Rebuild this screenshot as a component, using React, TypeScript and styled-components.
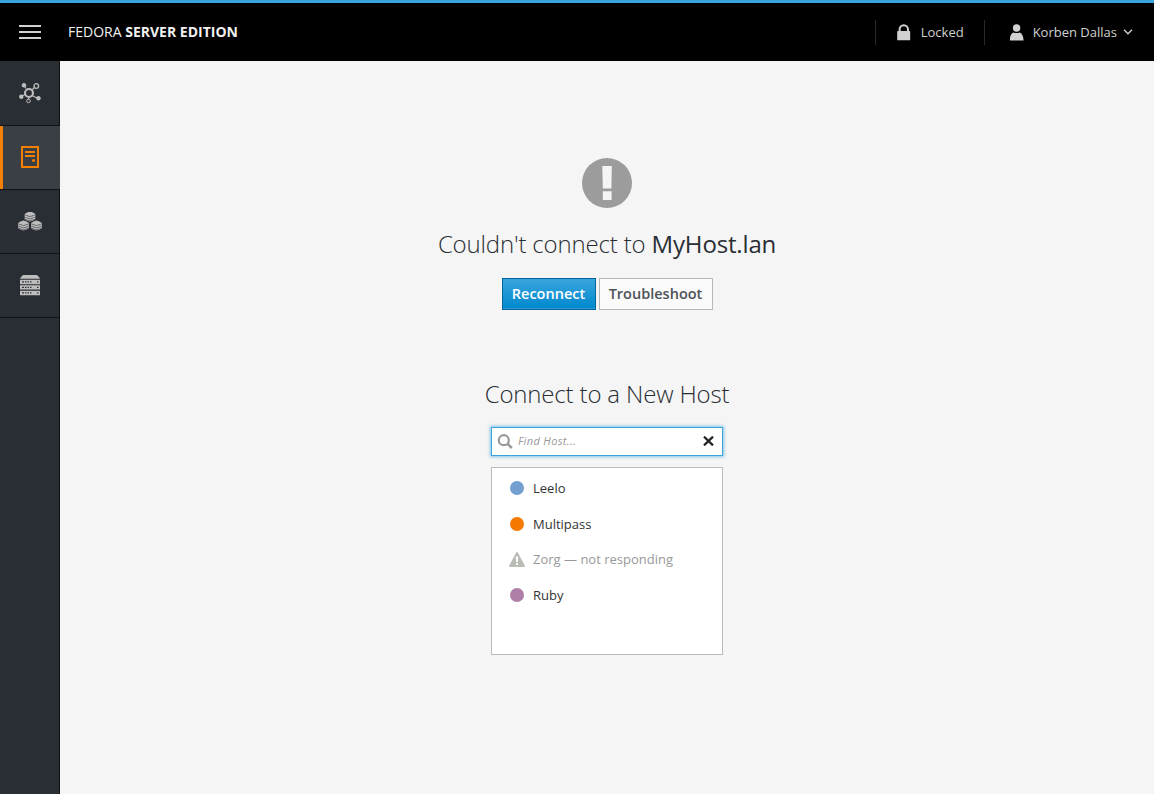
import React from "react";
import styled, { createGlobalStyle } from "styled-components";

const GlobalStyle = createGlobalStyle`
  *, *::before, *::after { box-sizing: border-box; }
  body {
    margin: 0;
    background: #f5f5f5;
    color: #292e34;
    font-family: "Open Sans", sans-serif;
    font-size: 13px;
  }
`;

const Page = styled.div`
  display: flex;
  flex-direction: column;
  height: 794px;
  overflow: hidden;
`;

const Header = styled.header`
  display: flex;
  align-items: center;
  flex: none;
  height: 61px;
  padding-left: 19px;
  padding-right: 21px;
  border-top: 3px solid #39a5dc;
  background: #000;
  color: #d1d1d1;
`;

const MenuButton = styled.button`
  display: flex;
  flex-direction: column;
  gap: 4px;
  width: 22px;
  padding: 0;
  border: 0;
  background: none;
`;

const MenuBar = styled.span`
  height: 2px;
  background: #d1d1d1;
`;

const Brand = styled.div`
  margin-left: 27px;
  font-size: 14px;
  line-height: 20px;
  color: #f0f0f0;
  white-space: nowrap;
  strong { font-weight: 700; }
`;

const HeaderTools = styled.div`
  display: flex;
  align-items: center;
  margin-left: auto;
`;

const Tool = styled.div<{ $gap: number; $left: number; $right: number }>`
  display: flex;
  align-items: center;
  gap: ${(p) => p.$gap}px;
  height: 25px;
  padding-left: ${(p) => p.$left}px;
  padding-right: ${(p) => p.$right}px;
  border-left: 1px solid #292929;
  white-space: nowrap;
`;

const UserName = styled.span`
  display: flex;
  align-items: center;
  gap: 6px;
`;

const Body = styled.div`
  display: flex;
  flex: 1;
  min-height: 0;
`;

const Sidebar = styled.nav`
  width: 60px;
  flex: none;
  background: #292e34;
  border-right: 1px solid #101214;
`;

const NavItem = styled.a<{ $active?: boolean }>`
  display: flex;
  align-items: center;
  justify-content: center;
  width: ${(p) => (p.$active ? 60 : 59)}px;
  height: 64px;
  padding-bottom: ${(p) => (p.$active ? 2 : 0)}px;
  border-bottom: 1px solid #101214;
  color: ${(p) => (p.$active ? "#f57f00" : "#bdbdbd")};
  background: ${(p) => (p.$active ? "#393f45" : "transparent")};
  box-shadow: ${(p) => (p.$active ? "inset 3px 0 #f57f00" : "none")};
  &:first-child { height: 65px; }
  svg { display: block; }
`;

const Main = styled.main`
  flex: 1;
  display: flex;
  flex-direction: column;
  align-items: center;
  padding-top: 97px;
`;

const Title = styled.h1<{ $top: number }>`
  margin: ${(p) => p.$top}px 0 0;
  font-size: 24px;
  line-height: 34px;
  font-weight: 300;
  letter-spacing: -0.16px;
  white-space: nowrap;
  strong { font-weight: 400; }
`;

const Actions = styled.div`
  display: flex;
  gap: 3px;
  margin-top: 17px;
`;

const Button = styled.button<{ $primary?: boolean; $width: number }>`
  width: ${(p) => p.$width}px;
  height: 32px;
  padding: 0;
  border: 1px solid ${(p) => (p.$primary ? "#00659c" : "#b7b7b7")};
  background: ${(p) => (p.$primary ? "linear-gradient(#39a5dc, #0088ce)" : "#fafafa")};
  box-shadow: ${(p) => (p.$primary ? "inset 0 -1px #2b9bd6" : "none")};
  color: ${(p) => (p.$primary ? "#fff" : "#4d5258")};
  font: 600 14.5px/30px "Open Sans", sans-serif;
`;

const SearchBox = styled.div`
  display: flex;
  align-items: center;
  width: 232px;
  height: 29px;
  margin-top: 16px;
  padding: 0 8px 1px 5px;
  border: 1px solid #39a5dc;
  background: #fff;
  box-shadow: 0 0 3px 1px rgba(57, 165, 220, 0.6);
`;

const SearchInput = styled.input`
  flex: 1;
  min-width: 0;
  height: 20px;
  margin-left: 5px;
  padding: 0;
  border: 0;
  outline: 0;
  background: none;
  font: italic 11px/20px "Open Sans", sans-serif;
  letter-spacing: 0.35px;
  &::placeholder { color: #999; opacity: 1; }
`;

const HostList = styled.ul`
  width: 232px;
  height: 188px;
  margin: 11px 0 0;
  padding: 2.700px 0 0 17px;
  border: 1px solid #bbb;
  background: #fff;
  list-style: none;
`;

const HostRow = styled.li<{ $muted?: boolean }>`
  display: flex;
  align-items: center;
  gap: 8px;
  height: 35.4px;
  color: ${(p) => (p.$muted ? "#999" : "#333")};
`;

const Dot = styled.span<{ $color: string }>`
  width: 14px;
  height: 14px;
  margin: 0 1px;
  border-radius: 50%;
  background: ${(p) => p.$color};
`;

const LockIcon = () => (
  <svg width="14" height="17" viewBox="0 0 14 17" fill="currentColor">
    <path d="M1.6 7V5.4a5.2 5.2 0 0 1 10.4 0V7h.4q.8 0 .8.8v7.6q0 .9-.9.9H1.1q-.9 0-.9-.9V7.8Q.2 7 1 7zm2 0h6.4V5.4a3.2 3.2 0 0 0-6.4 0z" />
  </svg>
);

const UserIcon = () => (
  <svg width="14" height="17" viewBox="0 0 14 17" fill="currentColor">
    <circle cx="6.600" cy="4" r="3.7" />
    <path d="M-.4 16.400C-.1 12.200 1.100 9.300 3.400 8.400Q6.600 9.700 9.800 8.400C12.100 9.300 13.300 12.200 13.600 16.400z" />
  </svg>
);

const ChevronIcon = () => (
  <svg width="10" height="6" viewBox="0 0 10 6" fill="none" stroke="currentColor" strokeWidth="1.3">
    <path d="M1 .8 5 4.800 9 .8" />
  </svg>
);

const ClusterIcon = () => (
  <svg width="24" height="22" viewBox="0 0 24 22" fill="none" stroke="currentColor">
    <circle cx="11" cy="11" r="4" strokeWidth="2.1" />
    <path d="m6.500 4.500 1.500 2M14 8l2.500-2.500M4.500 13.700l2.500-1.200M14 13.500l5 2.500M10.700 15.500v2" strokeWidth="1.1" />
    <circle cx="18.300" cy="4" r="2.300" strokeWidth="1.300" />
    <circle cx="10.500" cy="18.900" r="1.800" strokeWidth="1" />
    <g fill="currentColor" stroke="none">
      <circle cx="6" cy="3.200" r="2.200" />
      <circle cx="3.300" cy="14.700" r="2.200" />
      <circle cx="20.500" cy="16.200" r="2.200" />
    </g>
  </svg>
);

const HostIcon = () => (
  <svg width="18" height="22" viewBox="0 0 18 22" fill="none" stroke="currentColor" strokeWidth="2">
    <path d="M1 1h16v20H1zM4 6h10M4 10h10M11 14.500h3" />
    <path d="M12.500 13v3" strokeWidth="1" />
  </svg>
);

const Stack = ({ x, y }: { x: number; y: number }) => (
  <g transform={`translate(${x} ${y})`}>
    <path d="M0 2.600Q2 .6 5.300 0 8.600.6 10.600 2.600v5.200Q8.600 9.600 5.300 10 2 9.600 0 7.800z" fill="currentColor" />
    <path d="m.6 3.600 4.700 1.500 4.700-1.500M.6 5.900l4.700 1.500 4.700-1.500M.6 8l4.700 1.300L10 8" fill="none" stroke="#393e43" strokeWidth=".65" />
  </g>
);

const ClustersIcon = () => (
  <svg width="24" height="20" viewBox="0 0 24 20">
    <Stack x={6.700} y={-0.500} />
    <Stack x={0.200} y={8.500} />
    <Stack x={13.200} y={8.500} />
  </svg>
);

const RackIcon = () => (
  <svg width="20" height="21" viewBox="0 0 20 21" fill="currentColor">
    <path d="M3 0h14l2.800 3v.8H.2V3z" />
    {[4.800, 10.200, 15.800].map((y) => (
      <g key={y}>
        <rect y={y} width="20" height="4.400" rx=".3" />
        <path d={`M2 ${y + 1.500}h2v1.300H2zm3 0h1.500v1.300H5zm2.500 0H9v1.300H7.500zm2.500 0h1.500v1.300H10zm7 0h1.500v1.300H17z`} fill="#33373b" />
      </g>
    ))}
  </svg>
);

const AlertIcon = () => (
  <svg width="50" height="50" viewBox="0 0 50 50">
    <circle cx="25" cy="25" r="25" fill="#9c9c9c" />
    <path d="M20.300 8h9.500L29.400 30.500h-8.600zM20.800 33.300h8.800V42h-8.800z" fill="#f5f5f5" />
  </svg>
);

const SearchIcon = () => (
  <svg width="16" height="15" viewBox="0 0 16 15" fill="none" stroke="#999" strokeWidth="2.200">
    <circle cx="6.800" cy="6.200" r="5" />
    <path d="m10.300 9.700 4.500 4.300" strokeWidth="2.500" />
  </svg>
);

const ClearIcon = () => (
  <svg width="11" height="10" viewBox="0 0 11 10" fill="none" stroke="#222" strokeWidth="2.200">
    <path d="m1 .6 9 8.800M10 .6 1 9.400" />
  </svg>
);

const WarningIcon = () => (
  <svg width="16" height="15" viewBox="0 0 16 15">
    <path d="M7.200.5q.8-.9 1.600 0L15.800 13.500q.4 1.500-1 1.500H1.200q-1.400 0-1-1.500z" fill="#b9bdb6" />
    <path d="M6.800 4.500h2.400L8.900 10H7.100zM7 11.200h2V13H7z" fill="#fff" />
  </svg>
);

const hosts = [
  { name: "Leelo", color: "#729fcf" },
  { name: "Multipass", color: "#f57900" },
  { name: "Zorg — not responding", color: null },
  { name: "Ruby", color: "#ad7fa8" },
];

export default function App() {
  return (
    <Page>
      <GlobalStyle />
      <Header>
        <MenuButton aria-label="Menu">
          <MenuBar /><MenuBar /><MenuBar />
        </MenuButton>
        <Brand>FEDORA <strong>SERVER EDITION</strong></Brand>
        <HeaderTools>
          <Tool $gap={10} $left={21} $right={20}><LockIcon /><span>Locked</span></Tool>
          <Tool $gap={9} $left={25} $right={0}>
            <UserIcon />
            <UserName>Korben Dallas<ChevronIcon /></UserName>
          </Tool>
        </HeaderTools>
      </Header>
      <Body>
        <Sidebar>
          <NavItem><ClusterIcon /></NavItem>
          <NavItem $active><HostIcon /></NavItem>
          <NavItem><ClustersIcon /></NavItem>
          <NavItem><RackIcon /></NavItem>
        </Sidebar>
        <Main>
          <AlertIcon />
          <Title $top={19}>Couldn't connect to <strong>MyHost.lan</strong></Title>
          <Actions>
            <Button $primary $width={94}>Reconnect</Button>
            <Button $width={114}>Troubleshoot</Button>
          </Actions>
          <Title as="h2" $top={67}>Connect to a New Host</Title>
          <SearchBox>
            <SearchIcon />
            <SearchInput placeholder="Find Host..." />
            <ClearIcon />
          </SearchBox>
          <HostList>
            {hosts.map((host) => (
              <HostRow key={host.name} $muted={!host.color}>
                {host.color ? <Dot $color={host.color} /> : <WarningIcon />}
                <span>{host.name}</span>
              </HostRow>
            ))}
          </HostList>
        </Main>
      </Body>
    </Page>
  );
}
